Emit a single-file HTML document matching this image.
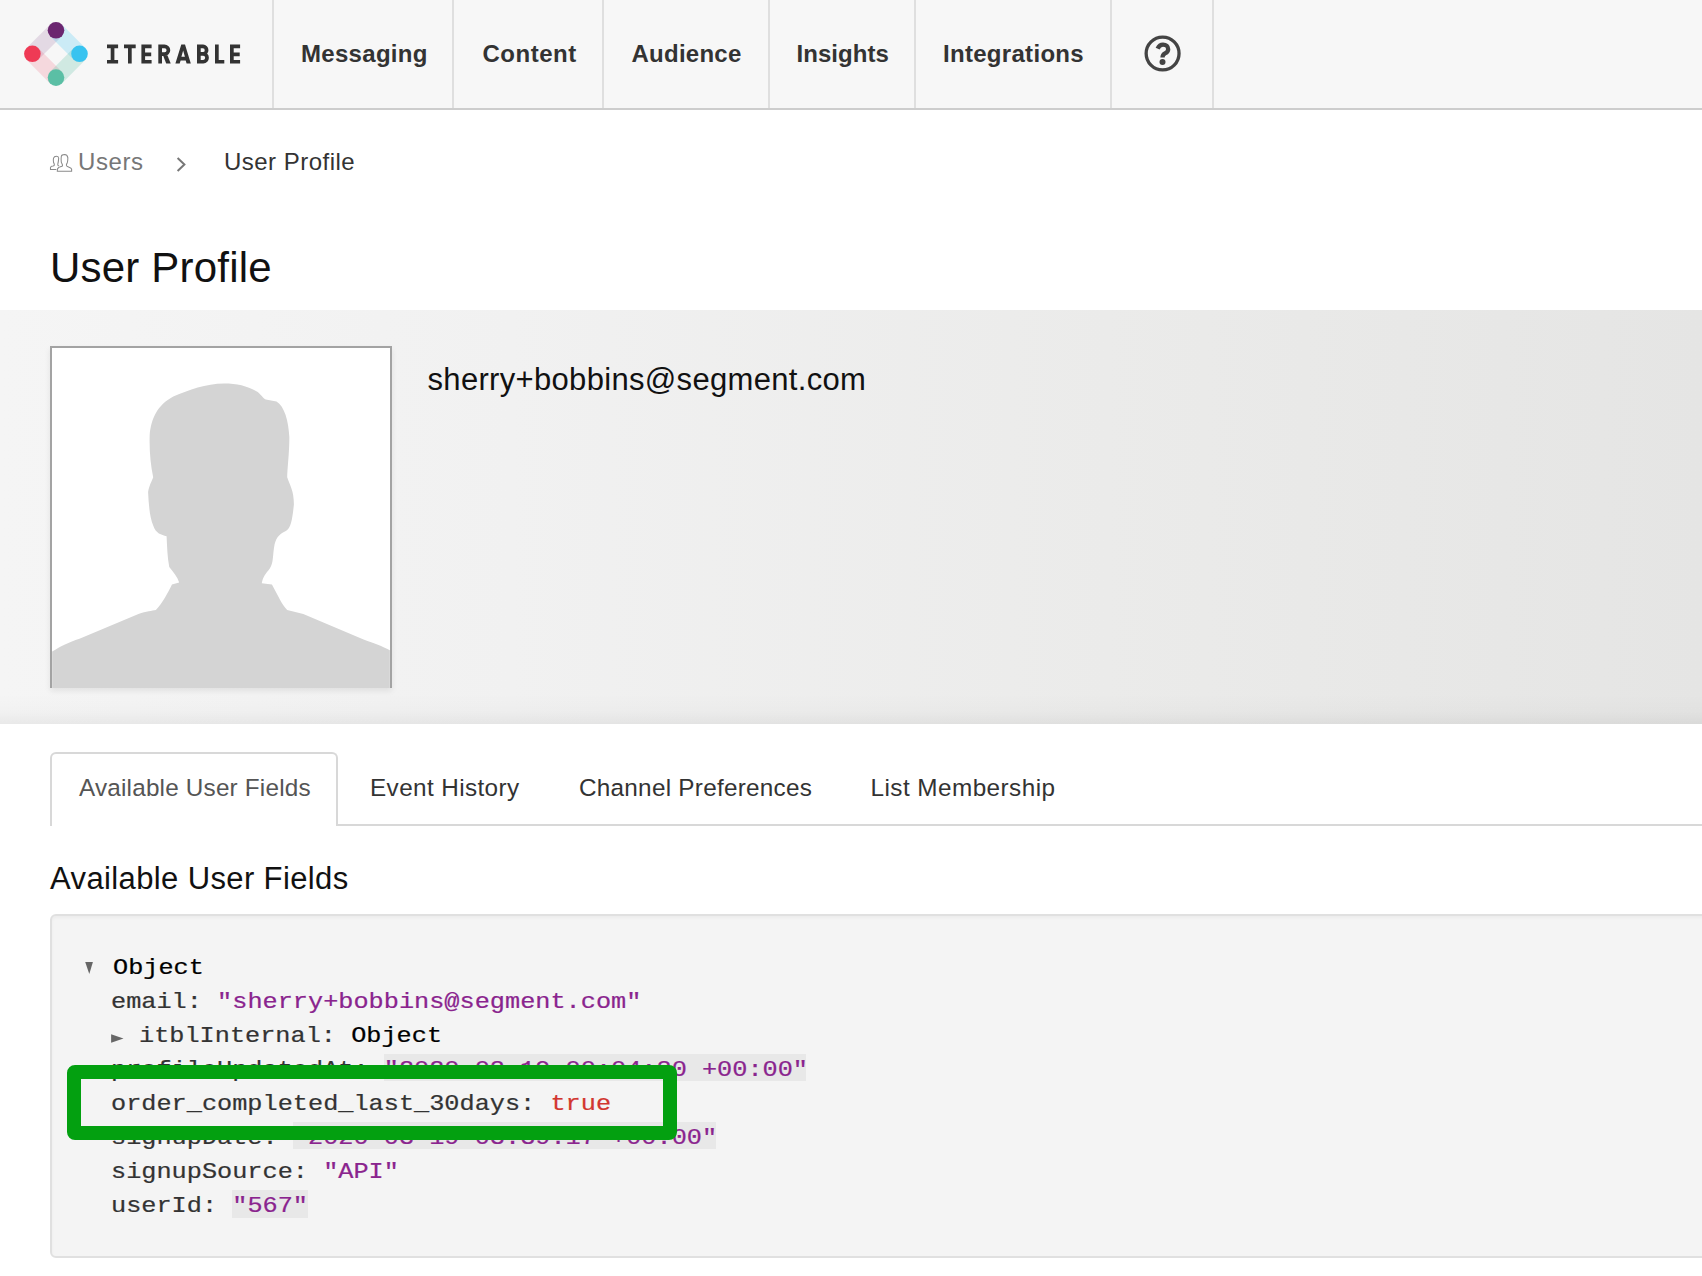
<!DOCTYPE html>
<html><head><meta charset="utf-8">
<style>
*{margin:0;padding:0;box-sizing:border-box}
html,body{width:1702px;height:1276px;overflow:hidden;background:#fff;font-family:"Liberation Sans",sans-serif}
.a{position:absolute;white-space:pre}
#nav{position:absolute;left:0;top:0;width:1702px;height:110px;background:#f7f7f7;border-bottom:2px solid #cdcdcd}
.sep{position:absolute;top:0;width:2px;height:108px;background:#dfdfdf}
.nl{position:absolute;top:42px;font-weight:bold;font-size:24px;line-height:24px;color:#333;letter-spacing:0.3px}
#panel{position:absolute;left:0;top:310px;width:1702px;height:414px;background:linear-gradient(to right,#f5f5f5 0%,#f1f1f1 30%,#ebebea 65%,#e5e5e4 100%)}
#panel:after{content:"";position:absolute;left:0;right:0;bottom:0;height:30px;background:linear-gradient(to bottom,rgba(0,0,0,0) 0%,rgba(0,0,0,0.015) 60%,rgba(0,0,0,0.05) 100%)}
#avatar{position:absolute;left:50px;top:346px;width:342px;height:342px;background:#fff;border:2px solid #a3a3a3;border-bottom:none;box-shadow:0 3px 6px rgba(0,0,0,0.08)}
.code{font-family:"Liberation Mono",monospace;font-size:25.25px;line-height:25.25px;color:#333;transform:scaleY(0.85);transform-origin:0 19.34px;-webkit-text-stroke:0.25px currentColor}
.str{color:rgb(138,36,142)}
.hlb{height:27.4px;background:#e8e8e8}
.tab{top:776px;font-size:24.3px;line-height:24.3px;color:#333}
</style></head><body>
<div id="nav">
  <svg class="a" style="left:0;top:0" width="100" height="108" viewBox="0 0 100 108">
    <g stroke-width="16.6" stroke-linecap="butt" opacity="1">
      <line x1="56" y1="30.3" x2="32.4" y2="53.8" stroke="#6b2670" stroke-opacity="0.14"/>
      <line x1="56" y1="30.3" x2="79.5" y2="53.8" stroke="#38c3f0" stroke-opacity="0.23"/>
      <line x1="32.4" y1="53.8" x2="56" y2="77.6" stroke="#ef3a55" stroke-opacity="0.16"/>
      <line x1="79.5" y1="53.8" x2="56" y2="77.6" stroke="#5bbfa5" stroke-opacity="0.25"/>
    </g>
    <circle cx="56" cy="30.3" r="8.3" fill="#6b2670"/>
    <circle cx="32.4" cy="53.8" r="8.3" fill="#ef3a55"/>
    <circle cx="79.5" cy="53.8" r="8.3" fill="#38c3f0"/>
    <circle cx="56" cy="77.6" r="8.3" fill="#5bbfa5"/>
  </svg>
  <svg class="a" style="left:100px;top:35px" width="150" height="40" viewBox="100 35 150 40" fill="none" stroke="#333" stroke-width="3.7">
    <path d="M107 46.35H118.1M107 61.75H118.1M112.55 44.5V63.6"/>
    <path d="M124 46.35H135.7M129.85 44.5V63.6"/>
    <path d="M143.25 44.5V63.6M141.4 46.35H151.6M141.4 54.35H151.2M141.4 61.75H151.6"/>
    <path d="M160.15 44.5V63.6M158.3 46.35H164.5A3.9 3.9 0 0 1 164.5 54.15H158.3"/>
    <path fill="#333" stroke="none" d="M163 55.2H167.4L170.7 63.6H166.2Z"/>
    <path fill="#333" stroke="none" fill-rule="evenodd" d="M175.4 63.6L181.3 44.5H185L190.8 63.6H186.6L185.7 60.6H180.6L179.7 63.6ZM181.4 56.8H184.9L183.15 50.5Z"/>
    <path d="M198.85 44.5V63.6M197 46.35H203A3.78 3.78 0 0 1 203 53.9H197M197 53.9H203.3A3.93 3.93 0 0 1 203.3 61.75H197"/>
    <path d="M216.85 44.5V63.6M215 61.75H224.3"/>
    <path d="M231.85 44.5V63.6M230 46.35H240.1M230 54.35H239.7M230 61.75H240.1"/>
  </svg>
  <div class="sep" style="left:272px"></div>
  <div class="sep" style="left:452px"></div>
  <div class="sep" style="left:602px"></div>
  <div class="sep" style="left:768px"></div>
  <div class="sep" style="left:914px"></div>
  <div class="sep" style="left:1110px"></div>
  <div class="sep" style="left:1212px"></div>
  <div class="nl" style="left:301px">Messaging</div>
  <div class="nl" style="left:482.5px;letter-spacing:0.5px">Content</div>
  <div class="nl" style="left:631.5px;letter-spacing:0.25px">Audience</div>
  <div class="nl" style="left:796.5px;letter-spacing:0.05px">Insights</div>
  <div class="nl" style="left:943px">Integrations</div>
  <svg class="a" style="left:1137px;top:28px" width="50" height="50" viewBox="0 0 50 50">
    <circle cx="25.6" cy="25.5" r="16.45" fill="none" stroke="#444" stroke-width="3.3"/>
    <path d="M20.6 20.6C21.8 17.9 23.9 16.6 26 16.6C29.1 16.6 31.2 18.6 31.2 21.2C31.2 23.3 29.8 24.5 28 25.4C26.3 26.3 25.5 27.3 25.5 29.6" fill="none" stroke="#444" stroke-width="4.3"/>
    <circle cx="25.5" cy="34.1" r="3" fill="#444"/>
  </svg>
</div>

<!-- breadcrumb -->
<svg class="a" style="left:46px;top:148px" width="30" height="30" viewBox="0 0 1276 1276" fill="none" stroke="#8a8a8a" stroke-width="44">
  <path d="M440 910L190 910L190 830C200 790 240 775 300 770C340 765 360 745 355 700C350 660 340 640 320 610C305 560 310 480 320 430C340 370 380 350 440 350C500 350 530 370 540 420M540 420C535 500 525 600 500 700C495 730 520 760 560 770"/>
  <path d="M480 990L1090 990L1090 900C1080 850 1040 830 980 815C920 800 880 790 870 750C860 700 870 670 900 640C920 590 930 500 930 420C920 330 870 280 790 275C720 275 660 300 650 360C640 430 640 520 650 600C680 680 720 720 700 760C680 790 600 800 540 830C500 850 470 890 480 990Z" fill="#fff"/>
</svg>
<svg class="a" style="left:170px;top:150px" width="24" height="28" viewBox="170 150 24 28"><path d="M177.6 158L184.4 164.5L177.6 171" fill="none" stroke="#777" stroke-width="2"/></svg>
<div class="a" style="left:78px;top:150px;font-size:24px;line-height:24px;color:#777;letter-spacing:0.6px">Users</div>
<div class="a" style="left:224px;top:150px;font-size:24px;line-height:24px;color:#333;letter-spacing:0.48px">User Profile</div>

<div class="a" style="left:50px;top:246.7px;font-size:42px;line-height:42px;color:#111;letter-spacing:0.2px">User Profile</div>

<div id="panel"></div>
<div id="avatar"><svg style="position:absolute;left:-2px;top:-2px" width="342" height="342" viewBox="0 0 1276 1276"><path fill="#d4d4d4" d="M8 1276L8 1140C40 1120 70 1105 110 1092L330 1000C360 990 380 988 395 985C420 960 440 920 455 890L482 882C475 860 460 845 445 825C438 790 437 750 435 710C415 705 395 700 385 670C372 640 368 590 366 545C370 520 380 505 385 490C375 440 370 390 372 330C378 270 400 220 460 188C520 165 580 140 650 140C700 140 740 150 775 172C790 185 795 195 805 200L845 207C875 225 890 280 893 340C893 400 885 460 885 490C895 520 910 540 910 590C905 640 900 680 880 690C860 700 845 710 838 740C830 780 835 810 820 830C805 850 795 860 790 885L828 890C850 930 865 965 885 985L945 1000L1170 1095C1210 1110 1240 1120 1268 1135L1268 1276Z"/></svg></div>
<div class="a" style="left:427.5px;top:364px;font-size:31px;line-height:31px;color:#111;letter-spacing:0.32px">sherry+bobbins@segment.com</div>


<div class="a" style="left:50px;top:752px;width:288px;height:74px;border:2px solid #d8d8d8;border-bottom:none;border-radius:6px 6px 0 0;background:#fff"></div>
<div class="a" style="left:336px;top:824px;width:1366px;height:2px;background:#d8d8d8"></div>
<div class="a tab" style="left:79px;color:#555;letter-spacing:0.19px">Available User Fields</div>
<div class="a tab" style="left:370px;letter-spacing:0.39px">Event History</div>
<div class="a tab" style="left:579px;letter-spacing:0.26px">Channel Preferences</div>
<div class="a tab" style="left:870.5px;letter-spacing:0.45px">List Membership</div>

<div class="a" style="left:50px;top:863px;font-size:31px;line-height:31px;color:#111;letter-spacing:0.38px">Available User Fields</div>

<div class="a" style="left:50px;top:914px;width:1680px;height:344px;border:2px solid #e0e0e0;border-radius:6px;background:#f4f4f4;box-shadow:inset 0 2px 3px rgba(0,0,0,0.035)"></div>
<div class="a hlb" style="left:383.7px;top:1053.7px;width:422.3px"></div>
<div class="a hlb" style="left:292.8px;top:1121.8px;width:423.2px"></div>
<div class="a hlb" style="left:232.1px;top:1190.2px;width:75.9px"></div>
<svg class="a" style="left:80px;top:955px" width="20" height="25" viewBox="80 955 20 25"><path d="M85.2 962H92.9L89.3 973.9Z" fill="#666"/></svg>
<svg class="a" style="left:105px;top:1030px" width="25" height="20" viewBox="105 1030 25 20"><path d="M111.1 1034.3L123.5 1038.5L111.1 1042.7Z" fill="#666"/></svg>
<div class="a code" style="left:113px;top:954.5px;color:#000">Object</div>
<div class="a code" style="left:111px;top:988.6px">email: <span class="str">"sherry+bobbins@segment.com"</span></div>
<div class="a code" style="left:139px;top:1022.7px">itblInternal: <span style="color:#000">Object</span></div>
<div class="a code" style="left:111px;top:1056.8px">profileUpdatedAt: <span class="str">"2020-03-19 00:04:30 +00:00"</span></div>
<div class="a code" style="left:111px;top:1090.9px">order_completed_last_30days: <span style="color:#d2362f">true</span></div>
<div class="a code" style="left:111px;top:1125px">signupDate: <span class="str">"2020-03-19 03:39:17 +00:00"</span></div>
<div class="a code" style="left:111px;top:1159.1px">signupSource: <span class="str">"API"</span></div>
<div class="a code" style="left:111px;top:1193.2px">userId: <span class="str">"567"</span></div>

<div class="a" style="left:66.9px;top:1064.7px;width:610.1px;height:75.6px;border:14px solid #03a010;border-radius:8px"></div>
</body></html>
